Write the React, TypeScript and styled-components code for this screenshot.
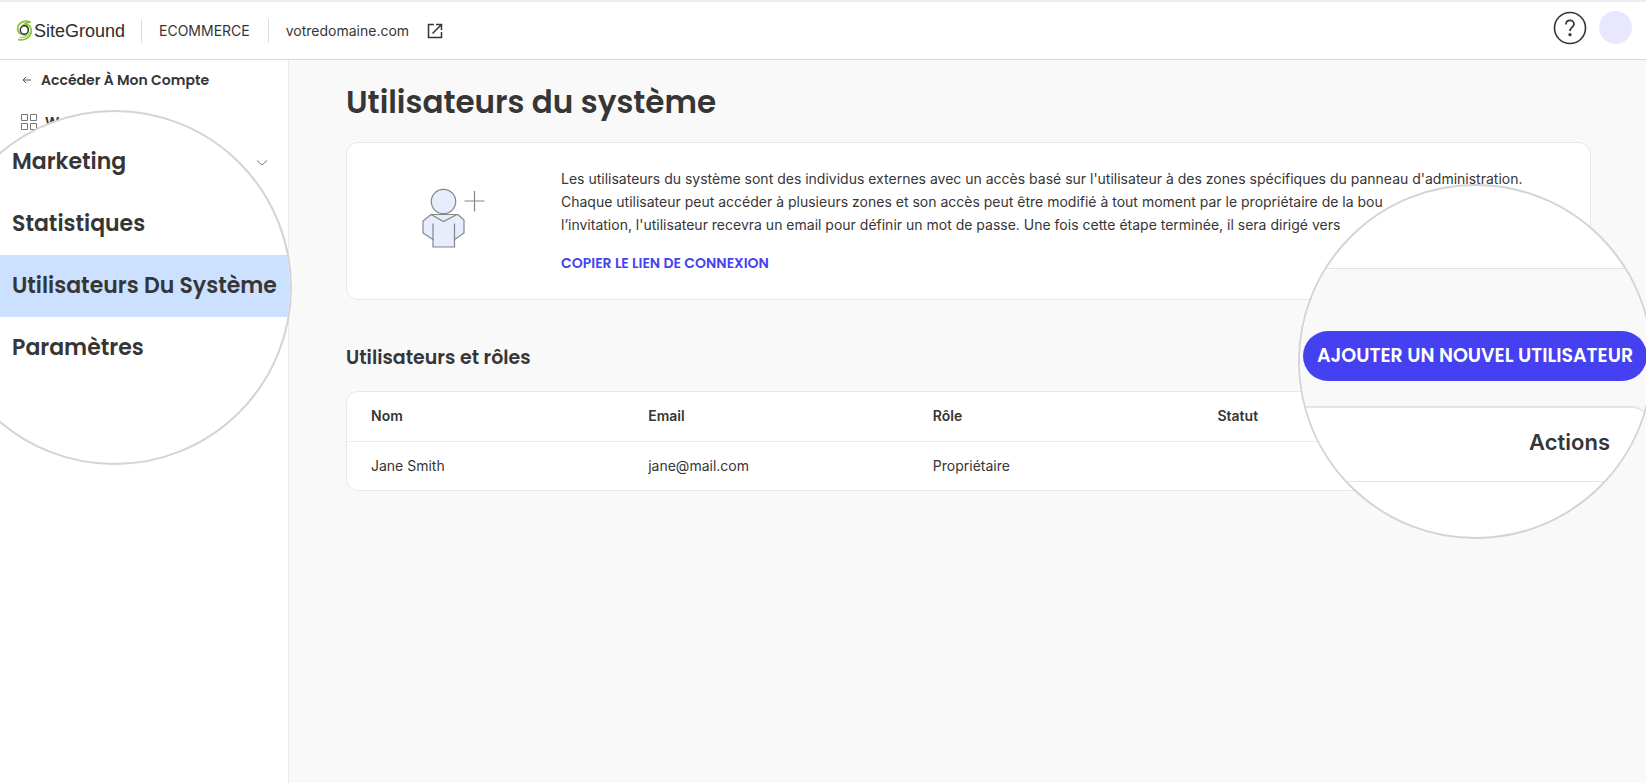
import React from "react";
import styled, { createGlobalStyle } from "styled-components";

const GlobalStyle = createGlobalStyle`
  * { box-sizing: border-box; }
  body {
    margin: 0;
    background: #f9f9f9;
    color: #363636;
    font-family: Inter, "Liberation Sans", sans-serif;
    font-size: 14px;
    line-height: 20px;
  }
  button { font: inherit; color: inherit; cursor: pointer; }
  a { color: inherit; text-decoration: none; }
`;

const heading = `font-family: Poppins, Inter, sans-serif; font-weight: 600;`;

const Page = styled.div`
  position: relative;
  min-height: 100vh;
  display: flex;
  flex-direction: column;
  overflow: hidden;
`;

const TopBar = styled.header`
  display: flex;
  align-items: center;
  height: 60px;
  padding: 0 14px 0 16px;
  background: #fff;
  border-top: 2px solid #ececec;
  border-bottom: 1px solid #d9d9d9;
`;

const Logo = styled.a`
  display: flex;
  align-items: center;
  flex: 0 0 125px;
  height: 24px;

  svg { flex: none; }
`;

const LogoText = styled.span`
  font-family: "Liberation Sans", sans-serif;
  font-size: 18px;
  line-height: 24px;
  color: #2d2d2d;
`;

const Crumb = styled.span`
  display: flex;
  align-items: center;
  gap: 18px;
  height: 24px;
  padding: 0 18px 0 17px;
  border-left: 1px solid #dcdcdc;
`;

const IconLink = styled.a`
  display: flex;
`;

const Tools = styled.div`
  display: flex;
  align-items: center;
  gap: 12px;
  margin-left: auto;
  padding-bottom: 6px;
`;

const HelpButton = styled.button`
  display: flex;
  padding: 0;
  border: 0;
  background: none;
`;

const Avatar = styled.button`
  width: 33px;
  height: 33px;
  padding: 0;
  border: 0;
  border-radius: 50%;
  background: #e9e7fe;
`;

const Body = styled.div`
  flex: 1;
  display: flex;
`;

const Sidebar = styled.aside`
  flex: 0 0 289px;
  padding: 10px 20px;
  background: #fff;
  border-right: 1px solid #ececec;
`;

const SideLink = styled.a`
  display: flex;
  align-items: center;
  gap: 7px;
  height: 20px;
  ${heading}
`;

const SideRow = styled.div`
  display: flex;
  align-items: center;
  justify-content: flex-end;
  height: 42px;
`;

const SideToggle = styled.button`
  display: flex;
  padding: 0;
  border: 0;
  background: none;
`;

const SideNav = styled.nav`
  display: flex;
  flex-direction: column;
  padding-top: 22px;
  gap: 10px;
`;

const Main = styled.main`
  flex: 1;
  min-width: 0;
  padding: 22px 55px 40px 57px;
`;

const Title = styled.h1`
  margin: 0 0 20px;
  ${heading}
  font-size: 31px;
  line-height: 40px;
`;

const InfoCard = styled.section`
  display: flex;
  padding: 24px 0 26px;
  background: #fff;
  border: 1px solid #e8e8e8;
  border-radius: 12px;
`;

const Illustration = styled.div`
  flex: 0 0 214px;
  display: flex;
  align-items: center;
  justify-content: center;
  padding: 0 3px 5px 0;
`;

const InfoText = styled.div`
  flex: 1;
  padding-right: 16px;
`;

const Paragraph = styled.p`
  margin: 0 0 17px;
  line-height: 23px;
`;

const CopyButton = styled.button`
  display: block;
  padding: 0;
  border: 0;
  background: none;
  ${heading}
  color: #4343f0;
`;

const SectionTitle = styled.h2`
  margin: 46px 0 21px;
  ${heading}
  font-size: 19px;
  line-height: 24px;
`;

const TableCard = styled.div`
  background: #fff;
  border: 1px solid #e8e8e8;
  border-radius: 12px;
  overflow: hidden;
`;

const Table = styled.table`
  width: 100%;
  table-layout: fixed;
  border-collapse: collapse;
  text-align: left;

  th, td { height: 49px; padding: 0 24px; }
  th { font-weight: 600; border-bottom: 1px solid #ececec; }
`;

const Col = styled.col<{ $w: string }>`
  width: ${(p) => p.$w};
`;

const Lens = styled.div<{ $side: "left" | "right" }>`
  position: absolute;
  top: ${(p) => (p.$side === "left" ? 110 : 184)}px;
  ${(p) => (p.$side === "left" ? "left: -63px;" : "right: -7px;")}
  width: 355px;
  height: 355px;
  border: 2px solid #d4d4d4;
  border-radius: 50%;
  background: #fff;
  overflow: hidden;
`;

const LensNav = styled.nav`
  display: flex;
  flex-direction: column;
  padding-top: 19px;
`;

const LensLink = styled.a<{ $active?: boolean }>`
  display: flex;
  align-items: center;
  height: 62px;
  padding-left: 73px;
  background: ${(p) => (p.$active ? "#cce0ff" : "transparent")};
  ${heading}
  font-size: 22px;
`;

const LensBand = styled.div`
  display: flex;
  align-items: flex-end;
  height: 138px;
  margin-top: 82px;
  padding: 0 0 25px 3px;
  background: #f9f9f9;
  border-top: 1px solid #e4e4e4;
`;

const AddButton = styled.button`
  width: 344px;
  height: 50px;
  padding: 0;
  border: 0;
  border-radius: 25px;
  background: #4541f1;
  color: #fff;
  ${heading}
  font-size: 19px;
  white-space: nowrap;
`;

const LensHead = styled.div`
  background: #f9f9f9;
`;

const LensCell = styled.div`
  height: 76px;
  margin-right: 3px;
  padding: 0 37px 5px 0;
  display: flex;
  align-items: center;
  justify-content: flex-end;
  background: #fff;
  border: 1px solid #e4e4e4;
  border-top-width: 2px;
  border-radius: 0 16px 0 0;
  font-size: 22px;
  font-weight: 600;
`;

const Swirl = () => (
  <svg width="18" height="24" viewBox="0 0 18 24" fill="none" strokeLinecap="round" aria-hidden="true">
    <path d="M14 3C8.500 .8 2.300 3.400 1.700 9C1.300 13.500 5 16.500 10 15.800" stroke="#8cc63f" strokeWidth="1.800" />
    <path d="M14 3C11.500 3.200 9.500 4 8.500 5.200C12.800 5.200 15.600 8 15.200 12.500C14.800 18.300 9 21.800 2.600 20.600" stroke="#8cc63f" strokeWidth="1.800" />
    <path d="M13.400 14C12 17.300 8.500 18.800 4 18.400" stroke="#a5d45f" strokeWidth="1.400" />
    <ellipse cx="8.300" cy="11" rx="4" ry="4.300" fill="#fff" stroke="#333" strokeWidth="1.500" />
    <path d="M9.800 6.800C10.800 7.300 11.800 8.300 12.300 9.600" stroke="#333" strokeWidth="1.200" />
  </svg>
);

const ExternalIcon = () => (
  <svg width="16" height="16" viewBox="0 0 16 16" fill="none" stroke="#363636" strokeWidth="1.500" aria-hidden="true">
    <path d="M7 1.500H1.500V14.500H14.500V9M9 1.500H14.500V7M14.500 1.500L5.500 10.500" />
  </svg>
);

const HelpIcon = () => (
  <svg width="34" height="34" viewBox="0 0 34 34" fill="none" stroke="#333" aria-hidden="true">
    <circle cx="17" cy="17" r="15.500" strokeWidth="1.600" />
    <path d="M13 13.500C13 8.200 21 8.200 21 13C21 16.300 17 16 17 20" strokeWidth="1.700" />
    <circle cx="17" cy="23.700" r="1.600" fill="#333" stroke="none" />
  </svg>
);

const ArrowIcon = () => (
  <svg width="14" height="12" viewBox="0 0 14 12" fill="none" stroke="#555" aria-hidden="true">
    <path d="M11 6H3.500M6 3L3 6L6 9" />
  </svg>
);

const GridIcon = () => (
  <svg width="18" height="18" viewBox="0 0 18 18" fill="none" stroke="#777" aria-hidden="true">
    <path d="M1.500 1.500h6v6h-6zM10.500 1.500h6v6h-6zM1.500 10.500h6v6h-6zM10.500 10.500h6v6h-6z" />
  </svg>
);

const ChevronIcon = () => (
  <svg width="12" height="8" viewBox="0 0 12 8" fill="none" stroke="#777" aria-hidden="true">
    <path d="M1 1.500L6 6L11 1.500" />
  </svg>
);

const PersonIcon = () => (
  <svg width="64" height="60" viewBox="0 0 64 60" fill="#e6edfc" stroke="#858585" strokeWidth="1.200" aria-hidden="true">
    <path d="M10 26.500H37L43 32V45L33.500 51.500V59H12V51.500L2 45V33Z" />
    <circle cx="22.500" cy="13.500" r="12.200" />
    <path d="M10 26.500L22.500 33.500L36 26.500M12 35.500V52M33.500 35.500V52" fill="none" />
    <path d="M43.500 13H63.500M53.500 3V23.500" fill="none" />
  </svg>
);

const columns = [
  { label: "Nom", width: "22.3%" },
  { label: "Email", width: "22.9%" },
  { label: "Rôle", width: "22.9%" },
  { label: "Statut", width: "auto" },
];

const users = [{ name: "Jane Smith", email: "jane@mail.com", role: "Propriétaire", status: "" }];

const menu = ["Marketing", "Statistiques", "Utilisateurs Du Système", "Paramètres"];

export default function App() {
  return (
    <Page>
      <GlobalStyle />
      <TopBar>
        <Logo href="#">
          <Swirl />
          <LogoText>SiteGround</LogoText>
        </Logo>
        <Crumb>ECOMMERCE</Crumb>
        <Crumb>
          votredomaine.com
          <IconLink href="#" aria-label="Ouvrir le site">
            <ExternalIcon />
          </IconLink>
        </Crumb>
        <Tools>
          <HelpButton type="button" aria-label="Aide">
            <HelpIcon />
          </HelpButton>
          <Avatar type="button" aria-label="Profil" />
        </Tools>
      </TopBar>

      <Body>
        <Sidebar>
          <SideLink href="#">
            <ArrowIcon />
            Accéder À Mon Compte
          </SideLink>
          <SideNav>
            <SideLink href="#">
              <GridIcon />
              Website
            </SideLink>
            <SideRow>
              <SideToggle type="button" aria-label="Développer Marketing">
                <ChevronIcon />
              </SideToggle>
            </SideRow>
          </SideNav>
        </Sidebar>

        <Main>
          <Title>Utilisateurs du système</Title>
          <InfoCard>
            <Illustration>
              <PersonIcon />
            </Illustration>
            <InfoText>
              <Paragraph>
                Les utilisateurs du système sont des individus externes avec un accès basé sur l'utilisateur à des zones
                spécifiques du panneau d'administration.
                <br />
                Chaque utilisateur peut accéder à plusieurs zones et son accès peut être modifié à tout moment par le
                propriétaire de la bou
                <br />
                l’invitation, l'utilisateur recevra un email pour définir un mot de passe. Une fois cette étape terminée,
                il sera dirigé vers
              </Paragraph>
              <CopyButton type="button">COPIER LE LIEN DE CONNEXION</CopyButton>
            </InfoText>
          </InfoCard>

          <SectionTitle>Utilisateurs et rôles</SectionTitle>
          <TableCard>
            <Table>
              <colgroup>
                {columns.map((c) => (
                  <Col key={c.label} $w={c.width} />
                ))}
              </colgroup>
              <thead>
                <tr>
                  {columns.map((c) => (
                    <th key={c.label} scope="col">
                      {c.label}
                    </th>
                  ))}
                </tr>
              </thead>
              <tbody>
                {users.map((u) => (
                  <tr key={u.email}>
                    <td>{u.name}</td>
                    <td>{u.email}</td>
                    <td>{u.role}</td>
                    <td>{u.status}</td>
                  </tr>
                ))}
              </tbody>
            </Table>
          </TableCard>
        </Main>
      </Body>

      <Lens $side="left">
        <LensNav>
          {menu.map((item) => (
            <LensLink key={item} href="#" $active={item === "Utilisateurs Du Système"}>
              {item}
            </LensLink>
          ))}
        </LensNav>
      </Lens>

      <Lens $side="right">
        <LensBand>
          <AddButton type="button">AJOUTER UN NOUVEL UTILISATEUR</AddButton>
        </LensBand>
        <LensHead>
          <LensCell>Actions</LensCell>
        </LensHead>
      </Lens>
    </Page>
  );
}
